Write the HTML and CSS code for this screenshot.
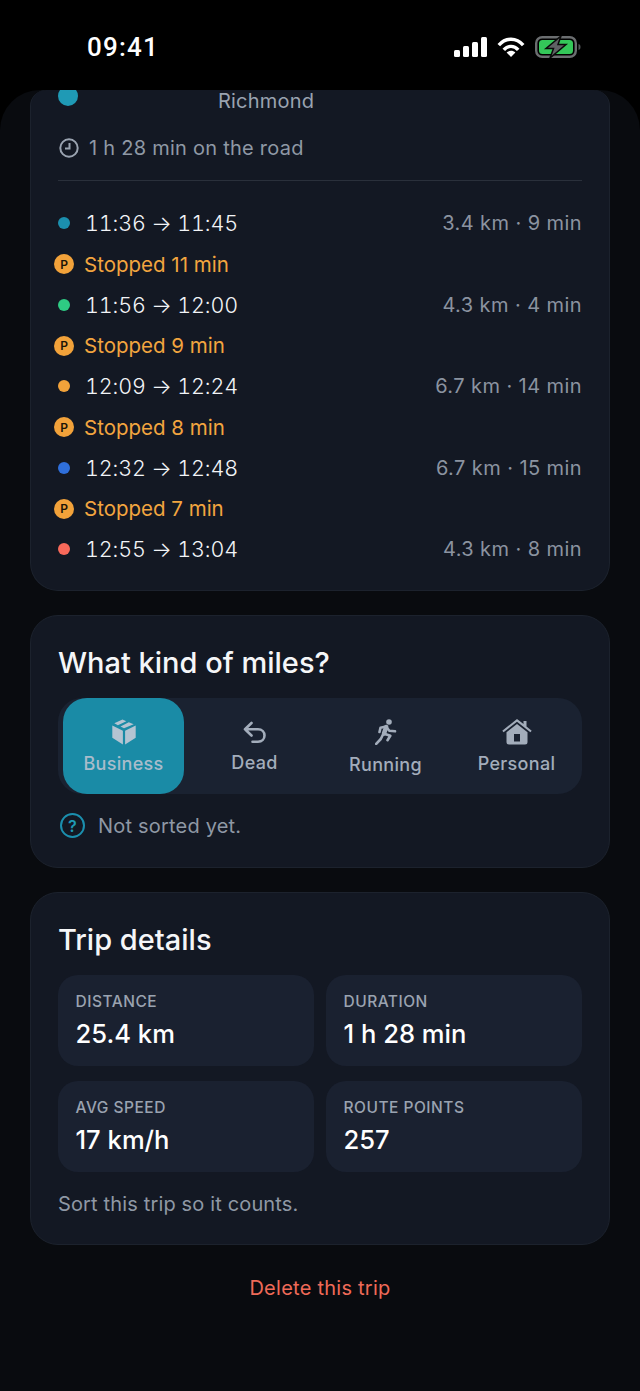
FILE: index.html
```html
<!DOCTYPE html>
<html lang="en">
<head>
<meta charset="utf-8">
<title>Trip</title>
<link rel="stylesheet" href="styles.css">
</head>
<body>
<div class="phone">
  <header class="status">
    <span class="clock">09:41</span>
    <div class="status-icons">
      <svg class="sig" width="33" height="20" viewBox="0 0 33 20"><rect x="0" y="13" width="6" height="7" rx="1.5"/><rect x="9" y="9" width="6" height="11" rx="1.5"/><rect x="18" y="5" width="6" height="15" rx="1.5"/><rect x="27" y="0" width="6" height="20" rx="1.5"/></svg>
      <svg class="wifi" width="28" height="20" viewBox="0 0 28 20"><path d="M1.800 8.200C8.500 .2 19.500 .2 26.200 8.200"/><path d="M6.800 12.800C10.800 8.200 17.200 8.200 21.200 12.800"/><path class="wifi-dot" d="M14 20l-4.400-4.600C12 13.300 16 13.300 18.400 15.400z"/></svg>
      <svg class="batt" width="46" height="22" viewBox="0 0 46 22"><rect x="1.200" y="1.200" width="39.600" height="19.600" rx="6" fill="none" stroke="#6b6e70" stroke-width="2.400"/><rect x="4" y="4" width="34" height="14" rx="3.500" fill="#34c759"/><path d="M43.500 8c1.500.4 2 1.500 2 3s-.5 2.600-2 3z" fill="#55585a"/><path d="M26 0L11 12.500h7.500L15 22l16-13.500h-8z" fill="#5f6264" stroke="#0a0a0a" stroke-width="1.500"/></svg>
    </div>
  </header>
  <main class="sheet">
    <section class="card card-route">
      <div class="route-top">
        <span class="route-dot"></span>
        <span class="route-place">Richmond</span>
      </div>
      <div class="road">
        <svg class="clock-icon" width="22" height="22" viewBox="0 0 22 22"><circle cx="11" cy="11" r="8.700"/><path d="M11.500 6v5.500H7"/></svg>
        <span>1 h 28 min on the road</span>
      </div>
      <div class="legs">
        <div class="leg"><span class="dot dot-teal"></span><span class="leg-time">11:36 → 11:45</span><span class="leg-meta">3.4 km · 9 min</span></div>
        <div class="stop"><span class="p">P</span><span>Stopped 11 min</span></div>
        <div class="leg"><span class="dot dot-green"></span><span class="leg-time">11:56 → 12:00</span><span class="leg-meta">4.3 km · 4 min</span></div>
        <div class="stop"><span class="p">P</span><span>Stopped 9 min</span></div>
        <div class="leg"><span class="dot dot-orange"></span><span class="leg-time">12:09 → 12:24</span><span class="leg-meta">6.7 km · 14 min</span></div>
        <div class="stop"><span class="p">P</span><span>Stopped 8 min</span></div>
        <div class="leg"><span class="dot dot-blue"></span><span class="leg-time">12:32 → 12:48</span><span class="leg-meta">6.7 km · 15 min</span></div>
        <div class="stop"><span class="p">P</span><span>Stopped 7 min</span></div>
        <div class="leg"><span class="dot dot-red"></span><span class="leg-time">12:55 → 13:04</span><span class="leg-meta">4.3 km · 8 min</span></div>
      </div>
    </section>

    <section class="card card-kind">
      <h2 class="title">What kind of miles?</h2>
      <div class="segments">
        <div class="seg seg-active">
          <svg width="24" height="26" viewBox="0 0 24 26" class="fill-icon"><path d="M10.500.6L2.300 4.300l3.600 1.900 8.400-4zM16.800 3.300L8.500 7.400l3.500 1.900 9.700-4.100zM.3 6.400v12.300L10.900 25.400V11.800zM23.700 6.400L13.100 11.800v13.600l10.600-6.700z"/></svg>
          <span>Business</span>
        </div>
        <div class="seg seg-dead">
          <svg width="26" height="26" viewBox="0 0 26 26" class="line-icon"><path d="M9.500 3L3 9.300l6.500 6.200M3 9.300h13c4 0 6.500 2.800 6.500 6.200s-2.500 6.200-6.500 6.200h-5.500"/></svg>
          <span>Dead</span>
        </div>
        <div class="seg seg-run">
          <svg width="22" height="26" viewBox="0 0 22 26"><circle class="run-head" cx="14" cy="3" r="2.800"/><g class="run-limbs"><path d="M11 7.500L5.500 8.800 4.500 13M11 7.500l3.300 4.200 5.700.6M8.500 14.500L5.800 20 1.200 24.800M8.500 14.500l6.800 2.300-2.800 4.400"/><path class="run-torso" d="M11.200 8L9 14.500"/></g></svg>
          <span>Running</span>
        </div>
        <div class="seg seg-personal">
          <svg width="30" height="26" viewBox="0 0 30 26" class="fill-icon"><path fill-rule="evenodd" d="M15 0l6.500 5V2h3v5.500l5.200 4.300-1.300 1.400L15 2.700 1.600 13.200.3 11.800zM15 5l10.500 8.300V23a2.500 2.500 0 0 1-2.500 2.500H7A2.500 2.500 0 0 1 4.500 23v-9.700zM12 15v7.500h6V15z"/></svg>
          <span>Personal</span>
        </div>
      </div>
      <div class="not-sorted">
        <span class="q">?</span>
        <span>Not sorted yet.</span>
      </div>
    </section>

    <section class="card card-details">
      <h2 class="title">Trip details</h2>
      <div class="grid">
        <div class="tile"><span class="tile-label">DISTANCE</span><span class="tile-value">25.4 km</span></div>
        <div class="tile"><span class="tile-label">DURATION</span><span class="tile-value">1 h 28 min</span></div>
        <div class="tile"><span class="tile-label">AVG SPEED</span><span class="tile-value">17 km/h</span></div>
        <div class="tile"><span class="tile-label">ROUTE POINTS</span><span class="tile-value">257</span></div>
      </div>
      <p class="hint">Sort this trip so it counts.</p>
    </section>

    <div class="delete">Delete this trip</div>
  </main>
</div>
</body>
</html>
```
FILE: styles.css
```css
* { box-sizing: border-box; }
html, body { margin: 0; padding: 0; background: #000; }
body { font-family: Inter, "Liberation Sans", sans-serif; color: #fff; }
.phone { width: 640px; height: 1391px; display: flex; flex-direction: column; overflow: hidden; background: #000; }

.status { height: 90px; flex: none; display: flex; justify-content: space-between; padding: 32px 59px 0 87px; align-items: flex-start; }
.clock { font-size: 26px; line-height: 31px; font-weight: 500; color: #fff; font-family: Roboto, Inter, sans-serif; letter-spacing: 1.200px; }
.status-icons { display: flex; align-items: center; gap: 10px; padding-top: 4px; }
.sig { fill: #fff; }
.wifi { fill: none; stroke: #fff; stroke-width: 3.400; }
.wifi-dot { fill: #fff; stroke: none; }

.sheet { flex: 1; background: #090b0f; border-radius: 40px 40px 0 0; overflow: hidden; padding: 0 30px; display: flex; flex-direction: column; gap: 24px; }

.card { background: #131823; border: 1px solid #1c222d; border-radius: 28px; padding: 0 27px; }
.card-route { height: 501px; border-top: 0; border-radius: 16px 16px 28px 28px; flex: none; }
.route-top { height: 30px; display: flex; }
.route-dot { width: 20px; height: 20px; border-radius: 50%; background: #1f9ab5; margin-top: -4px; }
.route-place { font-size: 20px; line-height: 22px; color: #9aa3b0; margin-left: 140px; letter-spacing: .2px; }
.road { height: 61px; display: flex; gap: 9px; align-items: center; font-size: 20px; color: #8f98a5; border-bottom: 1px solid #2a303b; padding-bottom: 5px; letter-spacing: .25px; }
.clock-icon { fill: none; stroke: #9aa3b0; stroke-width: 2; }

.legs { padding-top: 22px; display: flex; flex-direction: column; }
.leg, .stop { height: 40.750px; display: flex; align-items: center; font-size: 21px; }
.dot { width: 12px; height: 12px; border-radius: 50%; margin-right: 15px; flex: none; }
.dot-teal { background: #1b8fae; }
.dot-green { background: #2ecb83; }
.dot-orange { background: #f2a23a; }
.dot-blue { background: #2f6fdb; }
.dot-red { background: #f8695a; }
.leg-time { color: #f2f4f7; font-size: 21.500px; font-weight: 350; letter-spacing: -.15px; font-variant-numeric: tabular-nums; }
.leg-meta { margin-left: auto; color: #8b93a0; font-size: 20px; letter-spacing: .42px; }
.stop { color: #f2a53f; font-size: 20.500px; margin-left: -4px; gap: 10px; }
.p { width: 20px; height: 20px; border-radius: 50%; background: #f2a23a; color: #1a1408; font-size: 12px; font-weight: 600; display: flex; align-items: center; justify-content: center; }

.title { margin: 0; font-size: 29px; line-height: 34px; font-weight: 500; color: #f5f6f8; }
.card-kind { height: 253px; flex: none; padding-top: 30px; }
.segments { margin-top: 18px; height: 96px; background: #1a2231; border-radius: 24px; display: grid; grid-template-columns: repeat(4, 1fr); }
.seg { display: flex; flex-direction: column; align-items: center; justify-content: center; gap: 8px; padding-top: 1px; font-size: 18px; font-weight: 500; color: #a3adbb; letter-spacing: .3px; }
.seg-active { background: #1a8ba6; border-radius: 24px; color: #a9bccb; margin: 0 5px; }
.fill-icon { fill: #a3adbb; }
.seg-active .fill-icon { fill: #b4c4d2; }
.line-icon { fill: none; stroke: #a3adbb; stroke-width: 2.600; stroke-linecap: round; stroke-linejoin: round; }
.seg-dead { gap: 6px; }
.seg-run { gap: 9px; }
.run-head { fill: #a3adbb; }
.run-limbs { fill: none; stroke: #a3adbb; stroke-width: 2.600; stroke-linecap: round; stroke-linejoin: round; }
.run-torso { stroke-width: 4.500; }
.not-sorted { display: flex; align-items: center; gap: 13px; margin-top: 19px; font-size: 20px; color: #8f98a5; letter-spacing: .2px; padding-left: 2px; }
.q { width: 25px; height: 25px; border: 2px solid #1b8fae; border-radius: 50%; color: #1f9ab5; font-size: 16px; font-weight: 600; display: flex; align-items: center; justify-content: center; }

.card-details { height: 353px; flex: none; padding-top: 30px; }
.grid { display: grid; grid-template-columns: 1fr 1fr; gap: 15px 12px; margin-top: 18px; }
.tile { height: 91px; background: #1a2130; border-radius: 20px; padding: 17px 18px 0 17.500px; display: flex; flex-direction: column; }
.tile-label { font-size: 15.500px; line-height: 19px; font-weight: 500; color: #9aa3b0; letter-spacing: .5px; }
.tile-value { font-size: 25.600px; line-height: 32px; font-weight: 500; color: #fff; margin-top: 7px; }
.hint { margin: 19px 0 0; font-size: 20px; line-height: 26px; color: #8f98a5; letter-spacing: .15px; }

.delete { text-align: center; font-size: 20px; line-height: 26px; color: #ef6a58; margin-top: 6px; letter-spacing: .25px; }
```
